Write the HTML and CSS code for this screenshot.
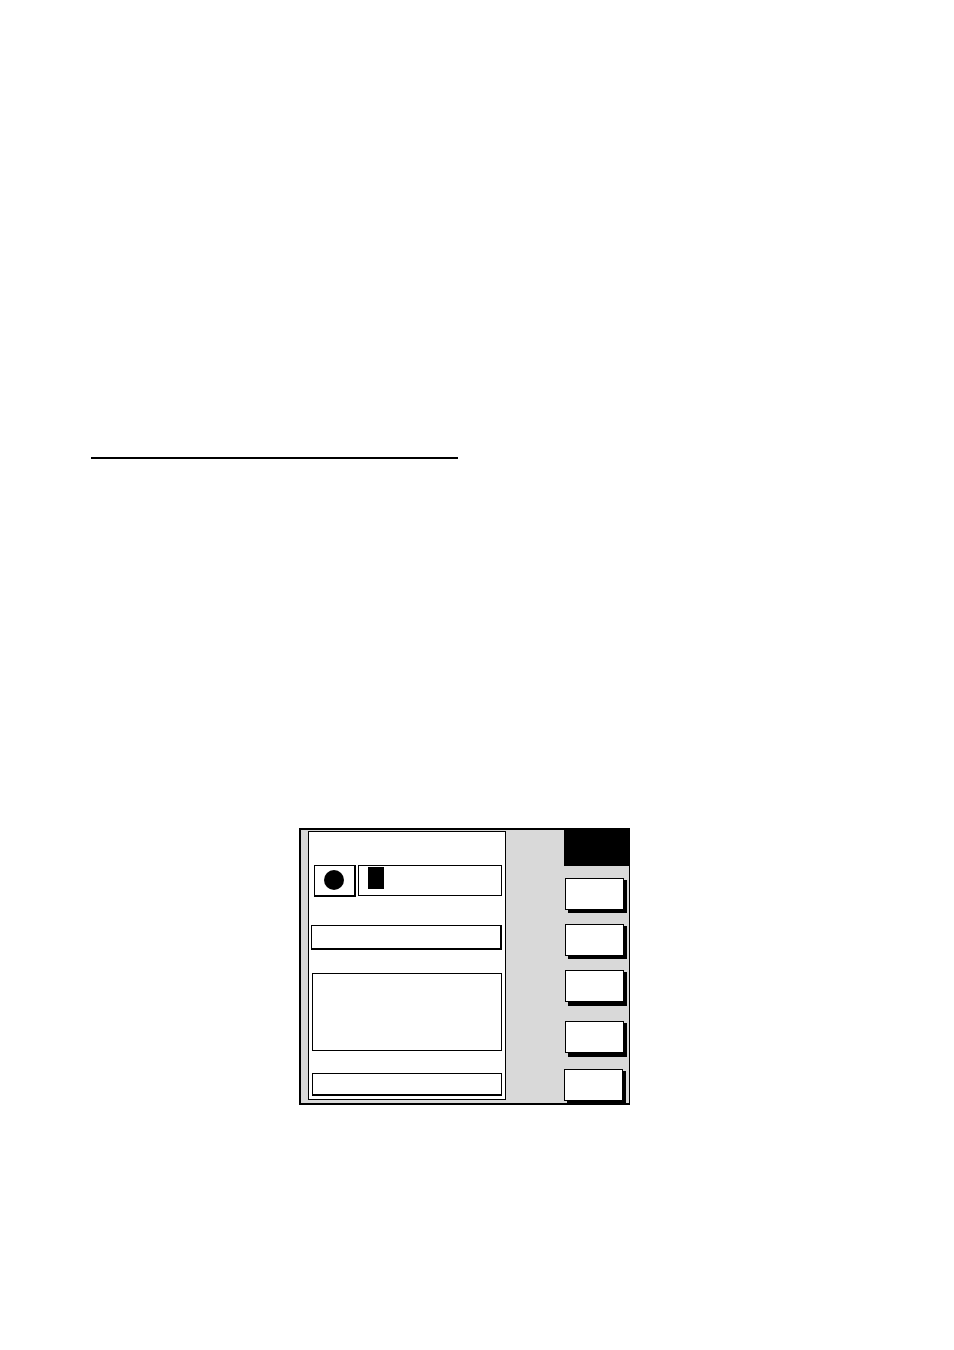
FILE: index.html
```html
<!DOCTYPE html>
<html lang="en">
<head>
<meta charset="utf-8">
<meta name="viewport" content="width=device-width, initial-scale=1">
<title>Device display</title>
<link rel="stylesheet" href="styles.css">
</head>
<body>
<main class="page">
  <hr class="rule">
  <section class="display">
    <form class="panel">
      <div class="entry">
        <div class="mark"><svg class="dot" viewBox="0 0 20 20" aria-hidden="true"><circle cx="10" cy="10" r="10"/></svg></div>
        <div class="name">
          <input class="box name-input" type="text" aria-label="Name">
          <span class="cursor"></span>
        </div>
      </div>
      <input class="box line heavy" type="text" aria-label="Value">
      <textarea class="box notes" aria-label="Notes"></textarea>
      <input class="box status" type="text" aria-label="Status">
    </form>
    <div class="side">
      <div class="title"></div>
      <div class="keys">
        <div class="group upper">
          <button class="key" type="button" aria-label="Key 1"></button>
          <button class="key" type="button" aria-label="Key 2"></button>
          <button class="key deep" type="button" aria-label="Key 3"></button>
        </div>
        <div class="group">
          <button class="key deep" type="button" aria-label="Key 4"></button>
          <button class="key last" type="button" aria-label="Key 5"></button>
        </div>
      </div>
    </div>
  </section>
</main>
</body>
</html>
```

FILE: styles.css
```css
* {
  box-sizing: border-box;
}

body {
  margin: 0;
  background: #fff;
  font: 14px/20px "Liberation Sans", Arial, sans-serif;
}

.page {
  padding: 457px 116px 240px 91px;
}

.rule {
  max-width: 367px;
  height: 2px;
  margin: 0;
  border: 0;
  background: #000;
}

.display {
  display: flex;
  justify-content: space-between;
  max-width: 331px;
  margin: 369px auto 0;
  border: 2px solid #000;
  border-right-width: 1px;
  background: #d9d9d9;
}

.panel {
  display: flex;
  flex-direction: column;
  flex: 0 1 198px;
  min-width: 0;
  margin: 1px 0 3px 7px;
  padding: 33px 3px 3px;
  border: 1px solid #000;
  background: #fff;
}

.box {
  display: block;
  width: 100%;
  min-width: 0;
  margin: 0;
  padding: 0 4px;
  border: 1px solid #000;
  border-radius: 0;
  outline: 0;
  background: #fff;
  font: inherit;
}

.entry {
  display: flex;
  gap: 2px;
  margin-left: 2px;
}

.mark {
  display: flex;
  flex: none;
  width: 42px;
  height: 32px;
  padding: 4px 0 0 9px;
  border: solid #000;
  border-width: 1px 2px 2px 1px;
}

.dot {
  width: 20px;
  height: 20px;
}

.name {
  position: relative;
  flex: 1;
  min-width: 0;
}

.name-input {
  height: 31px;
}

.cursor {
  position: absolute;
  top: 2px;
  left: 10px;
  width: 16px;
  height: 22px;
  background: #000;
}

.line {
  width: auto;
  height: 25px;
  margin: 28px 0 23px -1px;
}

.heavy {
  border-right-width: 2px;
  border-bottom-width: 2px;
}

.notes {
  height: 78px;
  resize: none;
}

.status {
  height: 23px;
  margin-top: 22px;
  border-bottom-width: 2px;
}

.side {
  display: flex;
  flex-direction: column;
  flex: none;
  width: 65px;
}

.title {
  height: 36px;
  background: #000;
}

.keys {
  display: flex;
  flex: 1;
  flex-direction: column;
  justify-content: space-between;
  padding: 12px 5px 2px 1px;
}

.group {
  display: flex;
  flex-direction: column;
  gap: 16px;
}

.upper {
  gap: 14px;
}

.key {
  height: 32px;
  padding: 0;
  border: 1px solid #000;
  border-radius: 0;
  background: #fff;
  box-shadow: 3px 2px #000, 3px 3px #000;
}

.deep {
  box-shadow: 3px 2px #000, 3px 4px #000;
}

.last {
  margin: 0 1px 0 -1px;
  box-shadow: 3px 2px #000;
}
```
